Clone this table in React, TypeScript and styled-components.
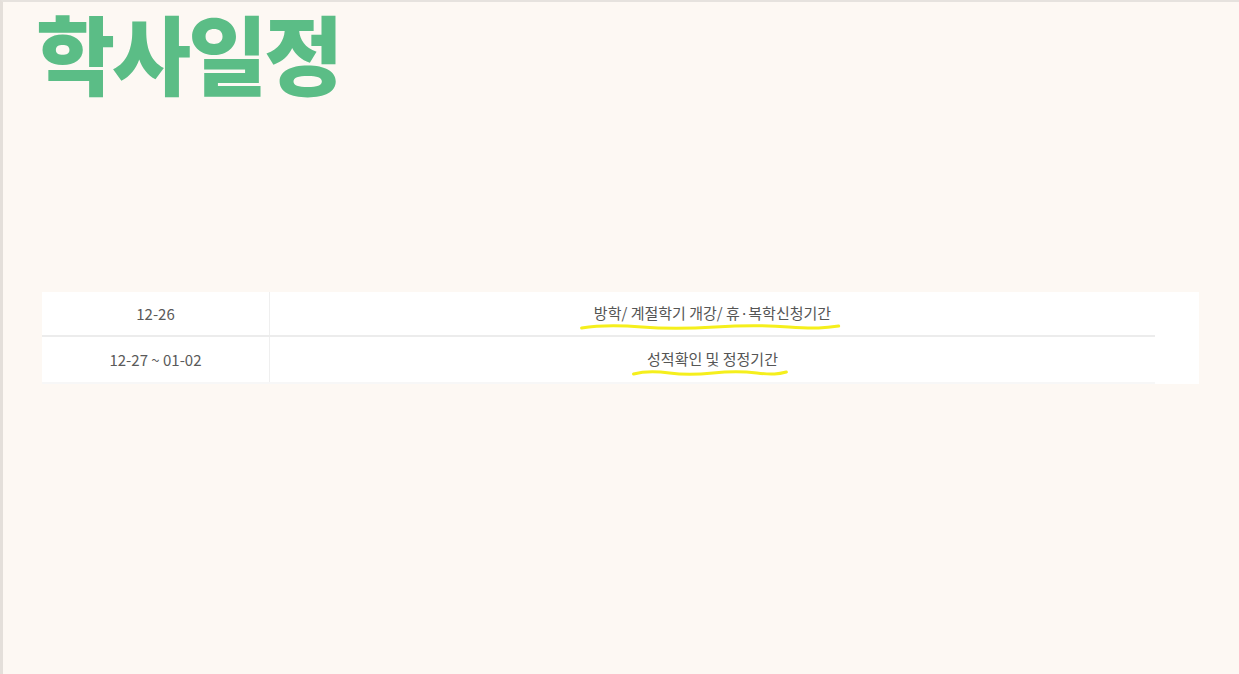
import React from 'react';
import styled, { createGlobalStyle } from 'styled-components';

/*
학사일정 page
1. big green title
2. white card with the schedule table (date | event)
*/

const GlobalStyle = createGlobalStyle`
  html, body {
    margin: 0;
    padding: 0;
    background: #fdf8f3;
  }
  body {
    font-family: 'Noto Sans CJK KR', 'Noto Sans', sans-serif;
  }
`;

type ScheduleItem = { date: string; title: string };

const schedule: ScheduleItem[] = [
  { date: '12-26', title: '방학/ 계절학기 개강/ 휴·복학신청기간' },
  { date: '12-27 ~ 01-02', title: '성적확인 및 정정기간' },
];

const Page = styled.div`
  box-sizing: border-box;
  min-height: 674px;
  border-left: 3px solid #e4dfda;
  border-top: 2px solid #e6e2de;
  background: #fdf8f3;
`;

const Header = styled.header`
  display: flow-root;
  height: 290px;
`;

const Title = styled.h1`
  margin: -12px 0 0;
  padding: 0 0 0 33px;
  font-family: 'Noto Sans CJK KR', sans-serif;
  font-weight: 900;
  font-size: 86px;
  line-height: 124px;
  letter-spacing: -3px;
  color: #5bbd86;
`;

const Card = styled.div`
  margin-left: 39px;
  width: 1157px;
  padding-right: 44px;
  box-sizing: border-box;
  background: #ffffff;
`;

const Table = styled.div`
  display: flex;
  flex-direction: column;
`;

const Row = styled.div<{ $last?: boolean }>`
  display: grid;
  grid-template-columns: 228px 1fr;
  height: ${p => (p.$last ? '45px' : '43px')};
  border-bottom: 2px solid ${p => (p.$last ? '#f7f7f7' : '#ececec')};
`;

const DateCell = styled.div`
  display: flex;
  align-items: center;
  justify-content: center;
  border-right: 1px solid #efefef;
  font-family: 'Noto Sans CJK KR', 'Noto Sans', sans-serif;
  font-size: 15px;
  color: #5a5a5a;
`;

const TitleCell = styled.div`
  display: flex;
  align-items: center;
  justify-content: center;
  font-size: 15px;
  color: #555;
`;

const Marked = styled.span`
  position: relative;
  top: -1px;
`;

const Wave = styled.svg`
  position: absolute;
  left: -15px;
  bottom: -8px;
  width: calc(100% + 25px);
  height: 9px;
  overflow: visible;
`;

const Squiggle = () => (
  <Wave viewBox="0 0 100 9" preserveAspectRatio="none">
    <path
      d="M1 6 C 8 3, 15 3, 24 5 S 40 7, 52 5 S 70 3, 80 5 S 94 6, 99 4"
      fill="none"
      stroke="#f5ef1c"
      strokeWidth="3"
      strokeLinecap="round"
      vectorEffect="non-scaling-stroke"
    />
  </Wave>
);

export default function App() {
  return (
    <Page>
      <GlobalStyle />
      <Header>
        <Title>학사일정</Title>
      </Header>
      <Card>
        <Table>
          {schedule.map((item, i) => (
            <Row key={item.date} $last={i === schedule.length - 1}>
              <DateCell>{item.date}</DateCell>
              <TitleCell>
                <Marked>
                  {item.title}
                  <Squiggle />
                </Marked>
              </TitleCell>
            </Row>
          ))}
        </Table>
      </Card>
    </Page>
  );
}
